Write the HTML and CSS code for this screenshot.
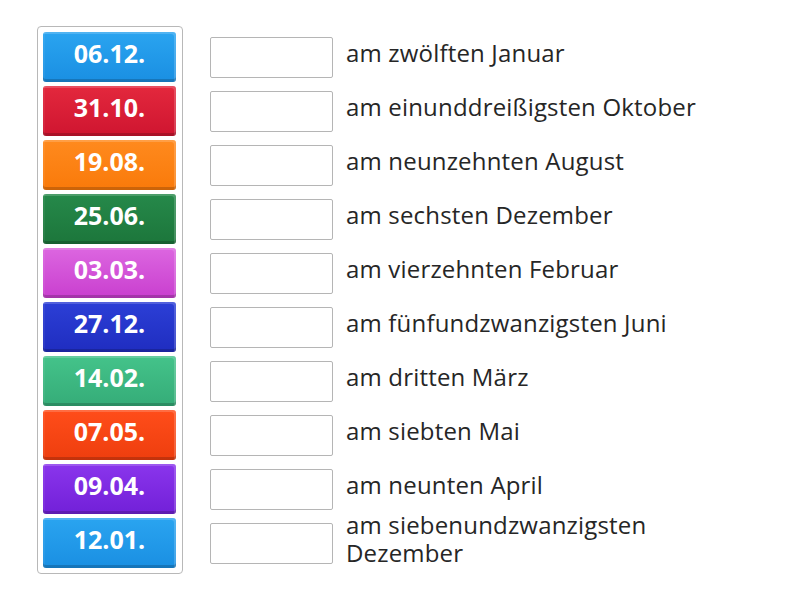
FILE: index.html
```html
<!DOCTYPE html>
<html lang="de">
<head>
<meta charset="utf-8">
<link rel="stylesheet" href="styles.css">
</head>
<body>
<div class="page">
  <div class="tiles">
    <div class="tile c-blue">06.12.</div>
    <div class="tile c-red">31.10.</div>
    <div class="tile c-orange">19.08.</div>
    <div class="tile c-green">25.06.</div>
    <div class="tile c-pink">03.03.</div>
    <div class="tile c-navy">27.12.</div>
    <div class="tile c-mint">14.02.</div>
    <div class="tile c-vermil">07.05.</div>
    <div class="tile c-purple">09.04.</div>
    <div class="tile c-blue">12.01.</div>
  </div>
  <div class="rows">
    <div class="row"><div class="slot"></div><div class="label">am zwölften Januar</div></div>
    <div class="row"><div class="slot"></div><div class="label">am einunddreißigsten Oktober</div></div>
    <div class="row"><div class="slot"></div><div class="label">am neunzehnten August</div></div>
    <div class="row"><div class="slot"></div><div class="label">am sechsten Dezember</div></div>
    <div class="row"><div class="slot"></div><div class="label">am vierzehnten Februar</div></div>
    <div class="row"><div class="slot"></div><div class="label">am fünfundzwanzigsten Juni</div></div>
    <div class="row"><div class="slot"></div><div class="label">am dritten März</div></div>
    <div class="row"><div class="slot"></div><div class="label">am siebten Mai</div></div>
    <div class="row"><div class="slot"></div><div class="label">am neunten April</div></div>
    <div class="row"><div class="slot"></div><div class="label">am siebenundzwanzigsten Dezember</div></div>
  </div>
</div>
</body>
</html>
```

FILE: styles.css
```css
html, body {
  margin: 0;
  padding: 0;
  background: #fff;
}
body {
  font-family: "Open Sans", "Liberation Sans", sans-serif;
  color: #222;
}
.page {
  display: flex;
  align-items: flex-start;
  padding: 26px 0 0 37px;
}
.tiles {
  display: flex;
  flex-direction: column;
  gap: 4px;
  padding: 5px 6px 5px 5px;
  border: 1px solid #b8b8b8;
  border-radius: 4px;
}
.tile {
  width: 133px;
  height: 50px;
  box-sizing: border-box;
  border-radius: 3px;
  color: #fff;
  font-weight: 700;
  font-size: 25px;
  line-height: 43px;
  text-align: center;
  box-shadow: inset 0 -3px 0 rgba(0,0,0,0.18), inset -2px 2px 0 rgba(255,255,255,0.18), inset 2px 0 0 rgba(255,255,255,0.06);
}
.c-blue { background: linear-gradient(#2aa4f0, #1a8fe2); }
.c-red { background: linear-gradient(#e3283d, #cf1530); }
.c-orange { background: linear-gradient(#ff8a1e, #f97a0a); }
.c-green { background: linear-gradient(#26894a, #1c763b); }
.c-pink { background: linear-gradient(#dc66e0, #c93fcf); }
.c-navy { background: linear-gradient(#2c3fd6, #1f2dc0); }
.c-mint { background: linear-gradient(#44c38a, #35ac78); }
.c-vermil { background: linear-gradient(#ff4d1a, #ee3e0e); }
.c-purple { background: linear-gradient(#8a35ec, #7220d8); }
.rows {
  display: flex;
  flex-direction: column;
  gap: 4px;
  margin-left: 27px;
  padding-top: 6px;
}
.row {
  height: 50px;
  display: flex;
  align-items: center;
  gap: 13px;
}
.slot {
  width: 123px;
  height: 41px;
  box-sizing: border-box;
  border: 1px solid #b5b5b5;
  border-radius: 2px;
  background: #fff;
  flex: none;
}
.label {
  font-size: 24px;
  line-height: 28px;
  letter-spacing: 0.18px;
  max-width: 380px;
  padding-bottom: 8px;
  color: #262626;
}
```
